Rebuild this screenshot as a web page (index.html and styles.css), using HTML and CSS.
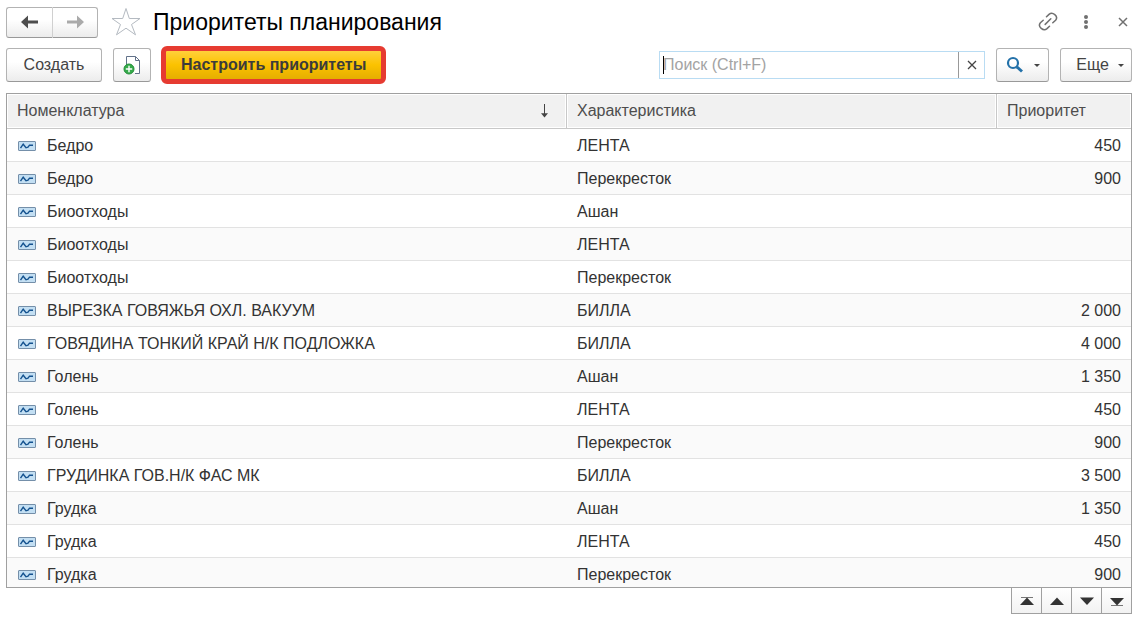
FILE: index.html
```html
<!DOCTYPE html>
<html lang="ru">
<head>
<meta charset="utf-8">
<title>Приоритеты планирования</title>
<link rel="stylesheet" href="styles.css">
</head>
<body>
<svg class="defs" aria-hidden="true">
  <symbol id="item" viewBox="0 0 18 10">
    <rect x=".5" y=".5" width="17" height="9" rx=".5" fill="#c3dff3" stroke="#748fa9"/>
    <path d="M2.5 7.2 L5.2 3.2 L8 6.8 L10 6.2 L11.5 4.2 H15" fill="none" stroke="#14528f" stroke-width="1.4"/>
  </symbol>
</svg>
<main class="page">
  <header class="titlebar">
    <div class="history">
      <button type="button" class="btn" aria-label="Назад"><svg width="18" height="14" viewBox="0 0 18 14"><path d="M0 7 7 .5V5.5H17V8.5H7V13.5Z" fill="#4d4d4d"/></svg></button>
      <button type="button" class="btn" aria-label="Вперед"><svg width="18" height="14" viewBox="0 0 18 14"><path d="M18 7 11 .5V5.5H1V8.5H11V13.5Z" fill="#aaa"/></svg></button>
    </div>
    <button type="button" class="plain" aria-label="Избранное"><svg width="30" height="30" viewBox="0 0 30 30"><path d="M15 1.5 18.3 11.5H29L20.5 17.5 24.5 27.8 15 21.2 5.5 27.8 9.5 17.5 1 11.5H11.7Z" fill="none" stroke="#b4bac1"/></svg></button>
    <h1>Приоритеты планирования</h1>
    <div class="window-tools">
      <button type="button" class="plain" aria-label="Ссылка"><svg width="20" height="20" viewBox="0 0 20 20" fill="none" stroke="#707070" stroke-width="1.5" stroke-linecap="round"><path d="M8.5 4.8 11 2.4C14.5-.8 20.8 4.2 17.6 8.2L14.8 10.8M11.5 14.2 9 16.6C5.5 19.8-.8 14.8 2.4 10.8L5.2 8.2M7.2 12.4 12.8 6.8"/></svg></button>
      <button type="button" class="plain" aria-label="Меню"><svg width="6" height="16" viewBox="0 0 6 16" fill="#707070"><circle cx="3" cy="3" r="2"/><circle cx="3" cy="8" r="2"/><circle cx="3" cy="13" r="2"/></svg></button>
      <button type="button" class="plain" aria-label="Закрыть"><svg width="18" height="10" viewBox="0 0 18 10"><path d="M5 1 13 9M13 1 5 9" stroke="#707070" stroke-width="1.5"/></svg></button>
    </div>
  </header>
  <div class="toolbar">
    <button type="button" class="btn create">Создать</button>
    <button type="button" class="btn copy" aria-label="Скопировать"><svg width="18" height="20" viewBox="0 0 18 20"><path d="M3.5 10V1.5H12.5L16.5 5.5V18.5H12" fill="#fff" stroke="#62728a"/><path d="M12.5 1.5V5.5H16.5" fill="none" stroke="#62728a"/><circle cx="6" cy="14" r="5" fill="#36ab4b" stroke="#238d38"/><path d="M6 10.8V17.2M2.8 14H9.2" stroke="#fff" stroke-width="1.4"/></svg></button>
    <button type="button" class="setup">Настроить приоритеты</button>
    <div class="search">
      <input type="text" placeholder="Поиск (Ctrl+F)" aria-label="Поиск">
      <span class="caret"></span>
      <button type="button" aria-label="Очистить"><svg width="10" height="10" viewBox="0 0 10 10"><path d="M1 1 9 9M9 1 1 9" stroke="#444" stroke-width="1.3"/></svg></button>
    </div>
    <button type="button" class="btn find" aria-label="Найти"><svg width="18" height="18" viewBox="0 0 18 18" fill="none" stroke="#2371a9"><circle cx="7" cy="7" r="5" stroke-width="2.2"/><path d="M10.8 10.8 16 15.5" stroke-width="3"/></svg><svg width="6" height="3" viewBox="0 0 6 3"><path d="M0 0H6L3 3Z" fill="#444"/></svg></button>
    <button type="button" class="btn more">Еще<svg width="6" height="3" viewBox="0 0 6 3"><path d="M0 0H6L3 3Z" fill="#444"/></svg></button>
  </div>
  <div class="list">
    <table>
      <colgroup><col><col class="col-char"><col class="col-prio"></colgroup>
      <thead><tr>
        <th><div class="sorted">Номенклатура<svg width="9" height="14" viewBox="0 0 9 14"><path d="M4.5 0V12" stroke="#444"/><path d="M1 9.2H8L4.5 13.5Z" fill="#444"/></svg></div></th>
        <th>Характеристика</th><th>Приоритет</th>
      </tr></thead>
      <tbody>
        <tr><td><svg class="mark"><use href="#item"/></svg>Бедро</td><td>ЛЕНТА</td><td>450</td></tr>
        <tr><td><svg class="mark"><use href="#item"/></svg>Бедро</td><td>Перекресток</td><td>900</td></tr>
        <tr><td><svg class="mark"><use href="#item"/></svg>Биоотходы</td><td>Ашан</td><td></td></tr>
        <tr><td><svg class="mark"><use href="#item"/></svg>Биоотходы</td><td>ЛЕНТА</td><td></td></tr>
        <tr><td><svg class="mark"><use href="#item"/></svg>Биоотходы</td><td>Перекресток</td><td></td></tr>
        <tr><td><svg class="mark"><use href="#item"/></svg>ВЫРЕЗКА ГОВЯЖЬЯ ОХЛ. ВАКУУМ</td><td>БИЛЛА</td><td>2 000</td></tr>
        <tr><td><svg class="mark"><use href="#item"/></svg>ГОВЯДИНА ТОНКИЙ КРАЙ Н/К ПОДЛОЖКА</td><td>БИЛЛА</td><td>4 000</td></tr>
        <tr><td><svg class="mark"><use href="#item"/></svg>Голень</td><td>Ашан</td><td>1 350</td></tr>
        <tr><td><svg class="mark"><use href="#item"/></svg>Голень</td><td>ЛЕНТА</td><td>450</td></tr>
        <tr><td><svg class="mark"><use href="#item"/></svg>Голень</td><td>Перекресток</td><td>900</td></tr>
        <tr><td><svg class="mark"><use href="#item"/></svg>ГРУДИНКА ГОВ.Н/К ФАС МК</td><td>БИЛЛА</td><td>3 500</td></tr>
        <tr><td><svg class="mark"><use href="#item"/></svg>Грудка</td><td>Ашан</td><td>1 350</td></tr>
        <tr><td><svg class="mark"><use href="#item"/></svg>Грудка</td><td>ЛЕНТА</td><td>450</td></tr>
        <tr><td><svg class="mark"><use href="#item"/></svg>Грудка</td><td>Перекресток</td><td>900</td></tr>
      </tbody>
    </table>
  </div>
  <nav class="pager" aria-label="Прокрутка списка">
    <button type="button" aria-label="В начало"><svg width="14" height="10" viewBox="0 0 14 10"><path d="M1 1.5H13" stroke="#777"/><path d="M7 1.5 14 9H0Z" fill="#333"/></svg></button>
    <button type="button" aria-label="Вверх"><svg width="14" height="10" viewBox="0 0 14 10"><path d="M7 1.5 14 9H0Z" fill="#333"/></svg></button>
    <button type="button" aria-label="Вниз"><svg width="14" height="10" viewBox="0 0 14 10"><path d="M7 9 14 1.5H0Z" fill="#333"/></svg></button>
    <button type="button" aria-label="В конец"><svg width="14" height="10" viewBox="0 0 14 10"><path d="M1 9.5H13" stroke="#777"/><path d="M7 9.5 14 2H0Z" fill="#333"/></svg></button>
  </nav>
</main>
</body>
</html>
```

FILE: styles.css
```css
* { box-sizing: border-box; }
body {
  margin: 0;
  background: #fff;
  color: #333;
  font: 16px/20px "Liberation Sans", Arial, sans-serif;
}
button, input { font: inherit; color: inherit; margin: 0; padding: 0; }
svg { display: block; flex: none; }
.defs { position: absolute; width: 0; height: 0; }
.page {
  display: flex;
  flex-direction: column;
  height: 100vh;
  padding: 7px 12px 9px 6px;
}
.btn {
  display: flex;
  align-items: center;
  justify-content: center;
  border: 1px solid #b3b3b3;
  border-bottom-color: #999;
  border-radius: 3px;
  background: linear-gradient(#fff 40%, #ececec);
  color: #444;
}
.plain { display: flex; border: 0; background: none; }

.titlebar { display: flex; align-items: center; height: 30px; }
.history { display: flex; margin-right: 13px; }
.history .btn { width: 46px; height: 31px; }
.history .btn:first-child { width: 47px; border-right-color: #d0d0d0; border-radius: 3px 0 0 3px; }
.history .btn:last-child { width: 45px; border-left: 0; border-radius: 0 3px 3px 0; }
h1 {
  margin: 0 0 0 12px;
  font-size: 23px;
  font-weight: 400;
  line-height: 28px;
  color: #000;
  white-space: nowrap;
}
.window-tools { display: flex; align-items: center; gap: 25px; margin-left: auto; }

.toolbar { display: flex; align-items: center; height: 38px; margin: 9px 0; }
.toolbar .btn { height: 34px; }
.create { width: 96px; }
.copy { width: 38px; margin: 0 10px 0 11px; }
.setup {
  height: 38px;
  padding: 0 15px;
  border: 5px solid #e63b31;
  border-radius: 6px;
  background: linear-gradient(#ffd03b, #fbc200 50%, #e5ae00);
  color: #3b3b3b;
  font-weight: 700;
  white-space: nowrap;
}
.search {
  position: relative;
  display: flex;
  width: 326px;
  height: 28px;
  margin-left: auto;
  border: 1px solid #b9dcf3;
}
.search input { flex: 1; min-width: 0; padding: 0 3px; border: 0; outline: 0; background: none; }
.search input::placeholder { color: #a3a3a3; opacity: 1; }
.caret { position: absolute; left: 3px; top: 4px; width: 1px; height: 18px; background: #000; }
.search button {
  display: flex;
  align-items: center;
  justify-content: center;
  width: 26px;
  border: 0;
  border-left: 1px solid #999;
  background: #fff;
}
.find { width: 53px; margin: 0 11px; gap: 10px; }
.more { width: 72px; padding-left: 8px; gap: 9px; }

.list { flex: 1; min-height: 0; overflow: hidden; border: 1px solid #a0a0a0; }
table { width: 100%; border-collapse: separate; border-spacing: 0; table-layout: fixed; }
.col-char { width: 430px; }
.col-prio { width: 134px; }
th {
  height: 35px;
  padding: 0 10px;
  border-right: 1px solid #c8c8c8;
  border-bottom: 1px solid #c8c8c8;
  background: #f1f1f1;
  box-shadow: inset 0 0 0 1px #fff;
  color: #4d4d4d;
  font-weight: 400;
  text-align: left;
}
th:last-child { border-right: 0; }
.sorted { display: flex; align-items: center; justify-content: space-between; padding-right: 7px; }
td { height: 33px; padding: 2px 10px 0; border-bottom: 1px solid #e2e2e2; white-space: nowrap; }
td:last-child { text-align: right; }
tbody tr:nth-child(even) { background: #fafafa; }
.mark { display: inline-block; width: 18px; height: 10px; margin: 0 11px 0 1px; }

.pager { display: flex; align-self: flex-end; height: 26px; border: 1px solid #a0a0a0; border-top: 0; }
.pager button {
  display: flex;
  align-items: center;
  justify-content: center;
  width: 30px;
  border: 0;
  border-right: 1px solid #a0a0a0;
  background: linear-gradient(#fff, #f2f2f2);
}
.pager button:last-child { width: 29px; border-right: 0; }
```
